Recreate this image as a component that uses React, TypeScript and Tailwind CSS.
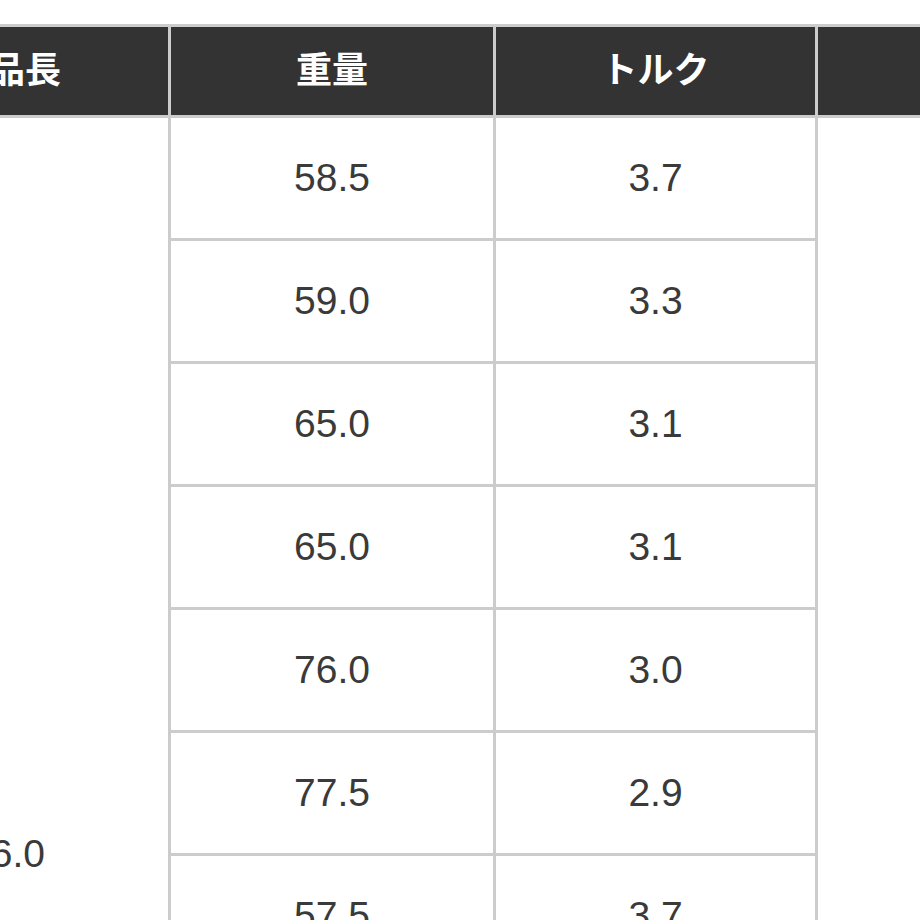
const rows = [
  { weight: '58.5', torque: '3.7' },
  { weight: '59.0', torque: '3.3' },
  { weight: '65.0', torque: '3.1' },
  { weight: '65.0', torque: '3.1' },
  { weight: '76.0', torque: '3.0' },
  { weight: '77.5', torque: '2.9' },
  { weight: '57.5', torque: '3.7' },
  { weight: '58.0', torque: '3.4' },
  { weight: '64.5', torque: '3.2' },
  { weight: '65.5', torque: '3.1' },
  { weight: '75.5', torque: '3.0' },
  { weight: '77.0', torque: '2.9' },
];

export default function App() {
  return (
    <div className="w-[920px] h-[920px] overflow-hidden bg-white pt-[24px] font-['Liberation_Sans','Noto_Sans_CJK_JP',sans-serif]">
      <table className="ml-[-157px] table-fixed border-collapse w-[1300px]">
        <colgroup>
          <col className="w-[325px]" />
          <col className="w-[325px]" />
          <col className="w-[322px]" />
          <col className="w-[328px]" />
        </colgroup>
        <thead>
          <tr className="h-[91px] bg-[#333333] text-white text-[36px] font-bold">
            <th className="border-[3px] border-[#cccccc]">製品長</th>
            <th className="border-[3px] border-[#cccccc]">重量</th>
            <th className="border-[3px] border-[#cccccc]">トルク</th>
            <th className="border-[3px] border-[#cccccc]">調子</th>
          </tr>
        </thead>
        <tbody className="text-[39px] text-[#3a3a3a] text-center">
          {rows.map((row, i) => (
            <tr key={i} className="h-[123px]">
              {i === 0 && (
                <td rowSpan={rows.length} className="border-[3px] border-[#cccccc] align-middle">
                  46.0
                </td>
              )}
              <td className="border-[3px] border-[#cccccc]">{row.weight}</td>
              <td className="border-[3px] border-[#cccccc]">{row.torque}</td>
              {i === 0 && (
                <td rowSpan={rows.length} className="border-[3px] border-[#cccccc] align-middle">
                  中元
                </td>
              )}
            </tr>
          ))}
        </tbody>
      </table>
    </div>
  );
}
